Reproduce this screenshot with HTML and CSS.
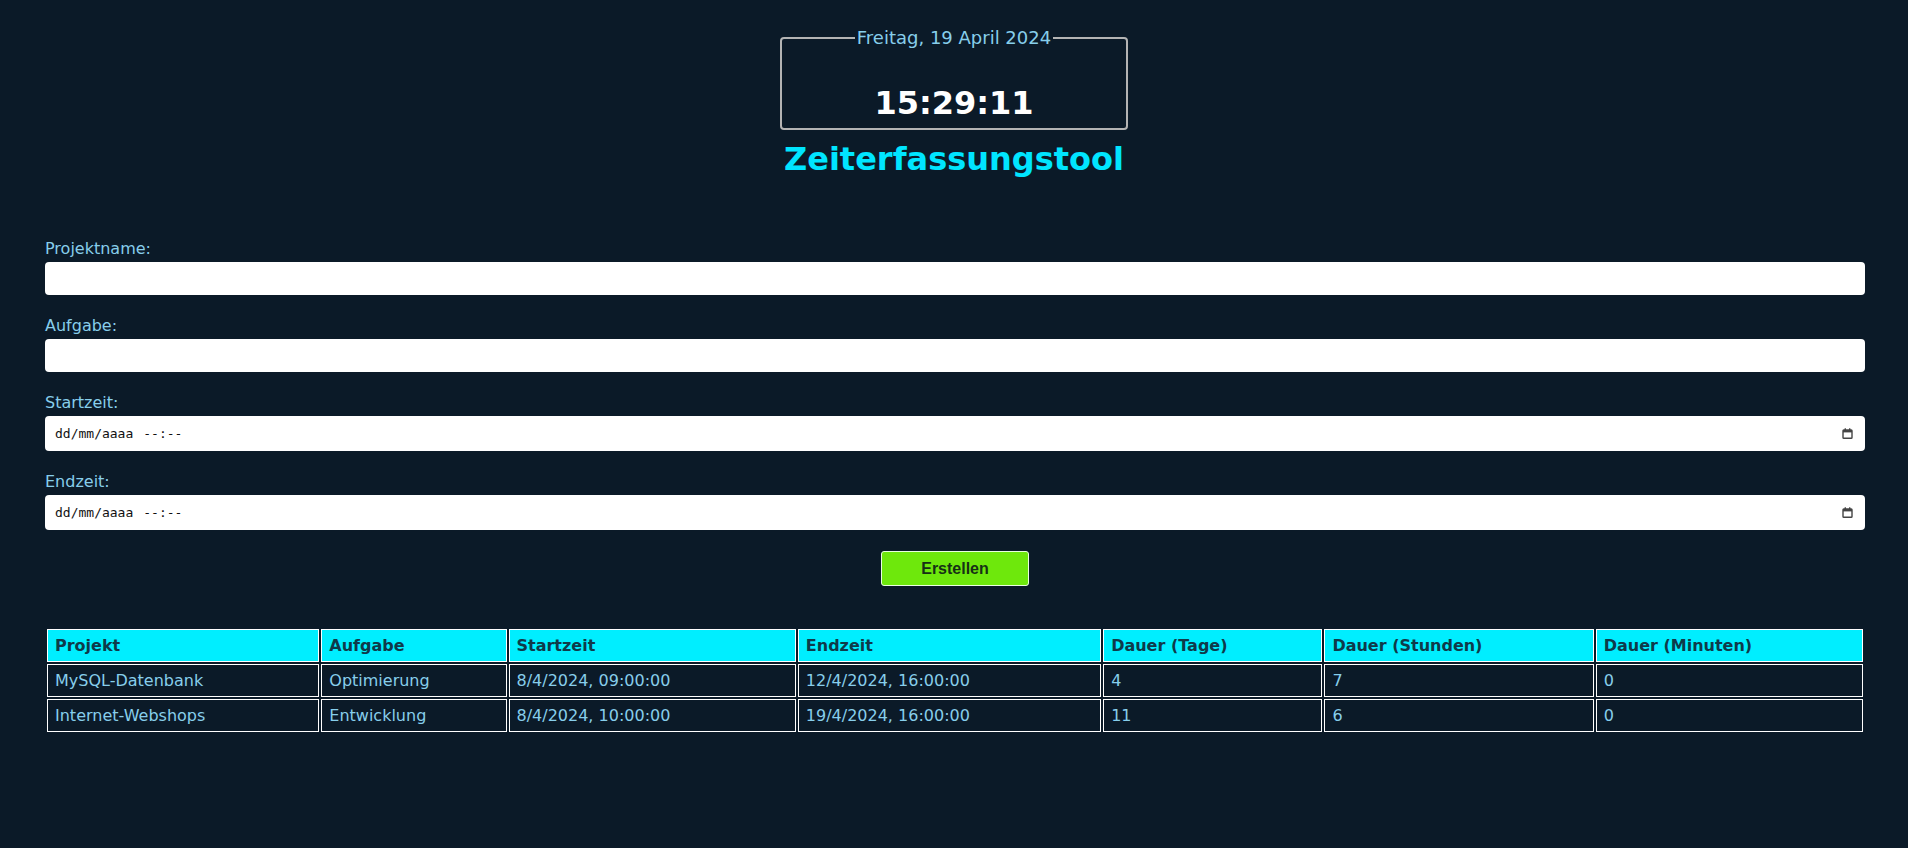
FILE: index.html
```html
<!DOCTYPE html>
<html lang="de">
<head>
<meta charset="utf-8">
<title>Zeiterfassungstool</title>
<link rel="stylesheet" href="styles.css">
</head>
<body>
<header class="header">
  <fieldset class="clock">
    <legend class="clock-date">Freitag, 19 April 2024</legend>
    <div class="clock-time">15:29:11</div>
  </fieldset>
  <h1 class="title">Zeiterfassungstool</h1>
</header>
<main class="main">
  <form class="form">
    <label class="label" for="projekt">Projektname:</label>
    <input class="input" id="projekt" type="text">
    <label class="label" for="aufgabe">Aufgabe:</label>
    <input class="input" id="aufgabe" type="text">
    <label class="label">Startzeit:</label>
    <div class="dt-input">
      <span class="dt-text">dd/mm/aaaa</span><span class="dt-time">--:--</span>
      <svg class="cal" width="11" height="11" viewBox="0 0 11 11"><rect x="1" y="2" width="9" height="8.2" rx="0.8" fill="none" stroke="#444" stroke-width="1.4"/><rect x="1" y="2" width="9" height="2.4" fill="#444"/><rect x="2.6" y="0.3" width="1.4" height="2.4" fill="#444"/><rect x="7" y="0.3" width="1.4" height="2.4" fill="#444"/></svg>
    </div>
    <label class="label">Endzeit:</label>
    <div class="dt-input">
      <span class="dt-text">dd/mm/aaaa</span><span class="dt-time">--:--</span>
      <svg class="cal" width="11" height="11" viewBox="0 0 11 11"><rect x="1" y="2" width="9" height="8.2" rx="0.8" fill="none" stroke="#444" stroke-width="1.4"/><rect x="1" y="2" width="9" height="2.4" fill="#444"/><rect x="2.6" y="0.3" width="1.4" height="2.4" fill="#444"/><rect x="7" y="0.3" width="1.4" height="2.4" fill="#444"/></svg>
    </div>
    <div class="actions">
      <button class="btn" type="button">Erstellen</button>
    </div>
  </form>
  <table class="table">
    <thead>
      <tr>
        <th class="c1">Projekt</th><th class="c2">Aufgabe</th><th class="c3">Startzeit</th><th class="c4">Endzeit</th><th class="c5">Dauer (Tage)</th><th class="c6">Dauer (Stunden)</th><th class="c7">Dauer (Minuten)</th>
      </tr>
    </thead>
    <tbody>
      <tr>
        <td>MySQL-Datenbank</td><td>Optimierung</td><td>8/4/2024, 09:00:00</td><td>12/4/2024, 16:00:00</td><td>4</td><td>7</td><td>0</td>
      </tr>
      <tr>
        <td>Internet-Webshops</td><td>Entwicklung</td><td>8/4/2024, 10:00:00</td><td>19/4/2024, 16:00:00</td><td>11</td><td>6</td><td>0</td>
      </tr>
    </tbody>
  </table>
</main>
</body>
</html>
```
FILE: styles.css
```css
* { box-sizing: border-box; }
html, body {
  margin: 0;
  padding: 0;
  background: #0b1a28;
}
body {
  font-family: "DejaVu Sans", Verdana, sans-serif;
  font-size: 16px;
  color: #87ceeb;
  min-height: 848px;
}
.header {
  display: flex;
  flex-direction: column;
  align-items: center;
  padding-top: 27px;
}
.clock {
  width: 348px;
  margin: 0;
  padding: 0 10px 5px;
  border: 2px solid #b4b4b4;
  border-radius: 4px;
  text-align: center;
}
.clock-date {
  padding: 0 2px;
  line-height: 21px;
  color: #87ceeb;
  font-size: 18px;
}
.clock-time {
  margin-top: 35px;
  font-size: 32px;
  font-weight: bold;
  line-height: 40px;
  color: #ffffff;
}
.title {
  margin: 9px 0 0;
  font-size: 32px;
  line-height: 40px;
  font-weight: bold;
  color: #00e5ff;
}
.main {
  padding: 60px 43px 0 45px;
}
.form {
  display: flex;
  flex-direction: column;
}
.label {
  display: block;
  line-height: 19px;
  margin-bottom: 4px;
  color: #87ceeb;
}
.input {
  display: block;
  width: 100%;
  height: 33px;
  margin: 0 0 21px;
  border: none;
  border-radius: 4px;
  background: #fff;
  padding: 0 10px;
  font-family: "DejaVu Sans", sans-serif;
  font-size: 14px;
}
.dt-input {
  display: flex;
  align-items: center;
  width: 100%;
  height: 35px;
  margin-bottom: 21px;
  border-radius: 4px;
  background: #fff;
  padding: 0 12px 0 10px;
  font-family: "DejaVu Sans Mono", monospace;
  font-size: 13px;
  color: #111;
}
.dt-time {
  margin-left: 10px;
}
.cal {
  margin-left: auto;
  display: block;
}
.actions {
  display: flex;
  justify-content: center;
}
.btn {
  width: 148px;
  height: 35px;
  background: #6ee80c;
  border: 1px solid #e8ffe0;
  border-radius: 3px;
  font-family: "Liberation Sans", Arial, sans-serif;
  font-weight: bold;
  font-size: 16px;
  color: #163016;
  cursor: pointer;
}
.table {
  width: 100%;
  margin-top: 41px;
  border-collapse: separate;
  border-spacing: 2px;
}
.table th,
.table td {
  border: 1px solid #ffffff;
  padding: 6px 7px;
  line-height: 19px;
  text-align: left;
  font-size: 16px;
}
.table th {
  background: #00eeff;
  color: #0f3a4a;
  font-weight: bold;
}
.table td {
  color: #87ceeb;
}
.c1 { width: 272px; }
.c2 { width: 185px; }
.c3 { width: 287px; }
.c4 { width: 303px; }
.c5 { width: 219px; }
.c6 { width: 269px; }
.c7 { width: 267px; }
```
